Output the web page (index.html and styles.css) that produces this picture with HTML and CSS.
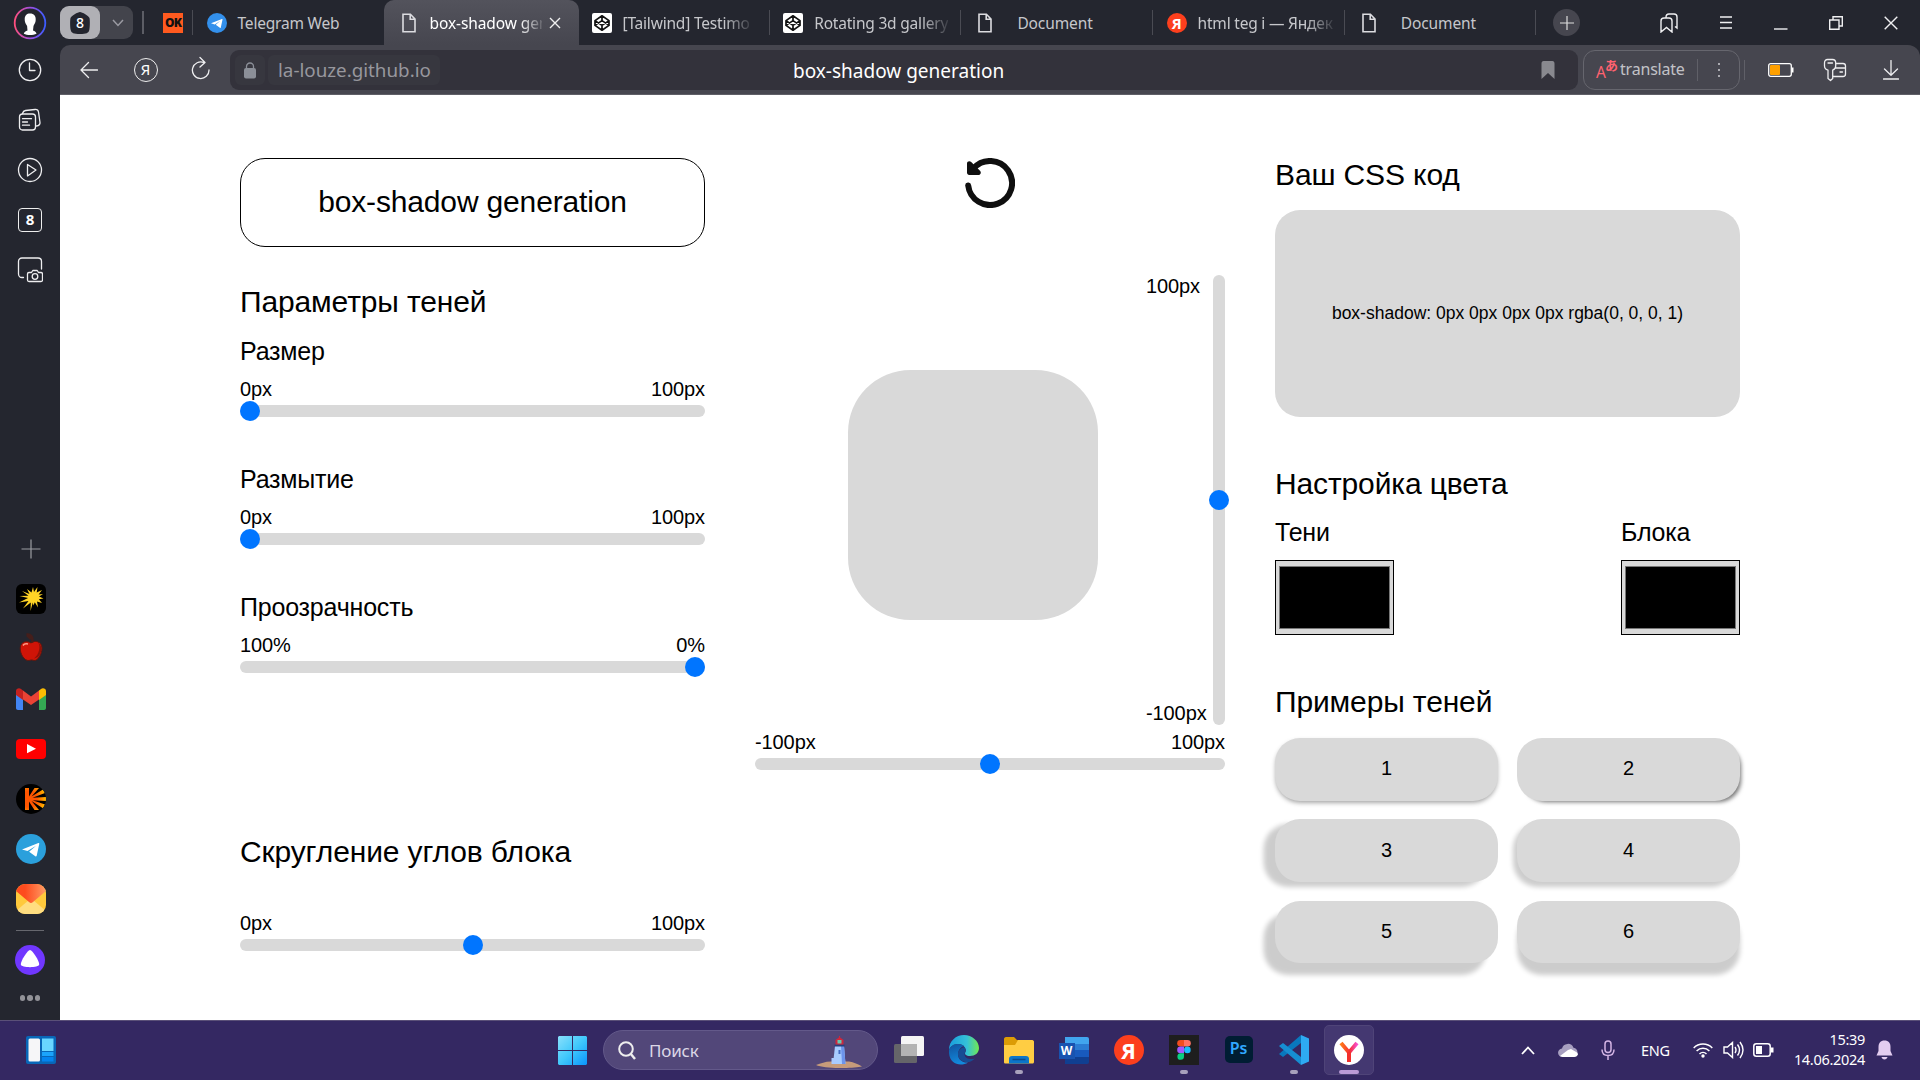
FILE: index.html
```html
<!DOCTYPE html>
<html lang="ru">
<head>
<meta charset="utf-8">
<title>box-shadow generation</title>
<link rel="stylesheet" href="styles.css">
</head>
<body>
<svg class="defs" width="0" height="0">
  <defs>
    <symbol id="file" viewBox="0 0 14 20"><path d="M1 1.2h7.4L13 6v12.8H1z M8.2 1.2V6.3H13" fill="none" stroke="#dcdce0" stroke-width="1.6"/></symbol>
    <symbol id="codepen" viewBox="0 0 20 20"><rect width="20" height="20" rx="2" fill="#fff"/><path d="M10 2.8l7 4.8v4.8l-7 4.8-7-4.8V7.6zM3 7.6l7 4.8 7-4.8M3 12.4l7-4.8 7 4.8M10 2.8v4.8M10 12.4v4.8" fill="none" stroke="#111" stroke-width="1.7" stroke-linejoin="round"/></symbol>
    <symbol id="plane" viewBox="0 0 30 30"><path d="M6 15.4L22.4 9c.6-.2 1 .2.9.8l-2.6 12c-.2.8-.8 1-1.4.5l-6.2-4.6 7-6-8.6 5.4z" fill="#fff"/></symbol>
  </defs>
</svg>
<div class="screen">
  <aside class="sidebar">
    <div class="slot slot-avatar"><svg width="34" height="34" viewBox="0 0 34 34"><defs><linearGradient id="ring" x1="0" x2="1"><stop offset="0" stop-color="#ff4f7d"/><stop offset=".5" stop-color="#a04fe0"/><stop offset="1" stop-color="#3c5cff"/></linearGradient></defs><circle cx="17" cy="17" r="15.3" fill="#23252e" stroke="url(#ring)" stroke-width="1.8"/><path d="M17 7.500c4 0 6 2.500 5.700 6.500 0 3-1.700 4-2.200 6l-.5 4.500c2 .5 3 1.500 3.500 3.200-3.500 1.800-9.500 1.800-12.700 0 .5-1.700 1.700-2.700 3.700-3.200l-.4-4.500c-1.200-2-2.600-4-2.400-7 .1-3.500 2-5.500 5.300-5.500z" fill="#fff"/></svg></div>
    <div class="slot"><svg width="26" height="26" viewBox="0 0 26 26" class="line"><circle cx="13" cy="13" r="10.700"/><path d="M12.500 6v7.500H18"/></svg></div>
    <div class="slot"><svg width="26" height="26" viewBox="0 0 26 26" class="line"><rect x="2.500" y="7" width="16" height="16" rx="3"/><path d="M5.500 6.500c.5-2 1.500-2.800 3-3l9.500-1c2-.2 3.200.7 3.500 2.500l1.500 10.500c.2 2-.7 3-3.500 3.500M5.500 11.700h9M5.500 15h5M5.500 18.200h7"/></svg></div>
    <div class="slot"><svg width="26" height="26" viewBox="0 0 26 26" class="line"><circle cx="13" cy="13" r="11.500"/><path d="M10.500 7.500l8.500 5.500-8.500 6z"/></svg></div>
    <div class="slot"><div class="tab-counter">8</div></div>
    <div class="slot"><svg width="26" height="26" viewBox="0 0 26 26" class="line"><path d="M6.500 20.500H5c-2 0-3.500-1.500-3.500-3.500V4.500c0-2 1.500-3.500 3.500-3.500h16c2 0 3.500 1.500 3.500 3.500V12M12 15.500h2.500l1.300-2h4.400l1.300 2H24c.8 0 1.500.5 1.500 1.500v6c0 .8-.6 1.500-1.500 1.500H12c-1 0-1.500-.6-1.500-1.500v-6c0-1 .6-1.500 1.500-1.500z"/><circle cx="18" cy="19.500" r="2.800"/></svg></div>
    <div class="slot slot-push"><svg width="20" height="20" viewBox="0 0 20 20"><path d="M10 .5v19M.5 10h19" stroke="#9c9da3" stroke-width="1.2"/></svg></div>
    <div class="slot"><svg width="30" height="30" viewBox="0 0 30 30"><rect width="30" height="30" rx="6" fill="#000"/><path d="M17 3l1 5 3.500-5-.8 5.600L26 6l-3.400 4.500L27 10l-4 2.600 4.500 2-4.700.7L26 19l-5-1.500 1 6-3.200-5.200-1.400 3.200-.6-3L14.500 27l.3-8.500L7 24.500l5.500-7.500L3 18.500 12 14 3.500 12l9-.3L6 7l7.500 3L11 5l4.500 3.500z" fill="#ffd426"/></svg></div>
    <div class="slot slot-apple"><svg width="30" height="30" viewBox="0 0 30 30"><path d="M15 10c3-3 11-2 11 5 0 6-4 13-8 12.500-2-.7-3-.7-5 0C8 28 4 20.500 4.200 15 4.500 8 11.500 7.500 15 10z" fill="#cf1407" stroke="#5c1810" stroke-width="1"/><path d="M22 9.500c3 4 1 12-4 16l4-1.500c4-4 5-11 0-14.500z" fill="#8e1208"/><path d="M10.500 1.500c4-.5 7 2 5.500 8M11 2l4 4" stroke="#451e1b" stroke-width="2.500" fill="none"/><path d="M7 12.500c1-1.500 3-2 5-1.500" stroke="#ff9d87" stroke-width="1.500" fill="none"/></svg></div>
    <div class="slot"><svg width="30" height="24" viewBox="0 0 30 24"><path d="M0 7v14c0 1 .8 2 2 2h5V12z" fill="#4285f4"/><path d="M30 7v14c0 1-.8 2-2 2h-5V12z" fill="#34a853"/><path d="M7 12.500v-9L15 9.500l8-6v9L15 18z" fill="#ea4335"/><path d="M0 4v4l7 5V3.500l-2-1.600C3 .4 0 1.600 0 4z" fill="#c5221f"/><path d="M30 4v4l-7 5V3.500l2-1.600c2-1.500 5-.3 5 2.100z" fill="#fbbc04"/></svg></div>
    <div class="slot"><svg width="30" height="20" viewBox="0 0 30 20"><rect width="30" height="20" rx="4" fill="#f00"/><path d="M11 5l9 4.700-9 4.600z" fill="#fff"/></svg></div>
    <div class="slot"><svg width="30" height="30" viewBox="0 0 30 30"><defs><radialGradient id="kino" cx=".2" cy=".5" r=".9"><stop offset=".4" stop-color="#ff5500"/><stop offset="1" stop-color="#ffcf00"/></radialGradient><clipPath id="kc"><circle cx="15" cy="15" r="15"/></clipPath></defs><circle cx="15" cy="15" r="15" fill="#000"/><path clip-path="url(#kc)" d="M9 4h4v8.500L18.500 4H23l-7.500 8.500L27 5.500l2 3.500-12.500 4.700L30 13v4l-13.500-.8L29 20.500l-2 3.800-11.500-7.200L23 26h-4.500L13 17.500V26H9z" fill="url(#kino)"/></svg></div>
    <div class="slot"><svg width="30" height="30" viewBox="0 0 30 30"><circle cx="15" cy="15" r="15" fill="#2ba0dc"/><use href="#plane"/></svg></div>
    <div class="slot"><svg width="30" height="30" viewBox="0 0 30 30"><defs><linearGradient id="flap" x2="1" y2="0"><stop offset=".3" stop-color="#fd4b1e"/><stop offset="1" stop-color="#ff9d66"/></linearGradient><clipPath id="mc"><rect width="30" height="30" rx="9"/></clipPath></defs><g clip-path="url(#mc)"><path d="M0 0h30v30H0z" fill="#ffc93c"/><path d="M0 27L13 16h4l13 11v3H0z" fill="#ffdd80"/><path d="M0 0h30v7L17 18q-2 2-4 0L0 7z" fill="url(#flap)"/></g></svg></div>
    <div class="side-rule"></div>
    <div class="slot slot-alice"><svg width="30" height="30" viewBox="0 0 30 30"><circle cx="15" cy="15" r="15" fill="#7037ff"/><path d="M15 5c2.500 0 9.300 11 9.200 14.500C24 23 6 23 5.800 19.500 5.700 16 12.500 5 15 5z" fill="#fff"/></svg></div>
    <div class="side-dots"><i></i><i></i><i></i></div>
  </aside>

  <div class="window">
    <header class="tabs">
      <div class="group"><span class="group-badge"><svg width="22" height="24" viewBox="0 0 22 24"><path d="M11 1c2 0 9 4 9.500 6 .5 2 .5 9-.2 12-.6 3-3 4-9.300 4s-8.700-1-9.300-4C1 16 1 9 1.500 7 2 5 9 1 11 1z" fill="#23252e"/></svg><b>8</b></span><svg width="12" height="8" viewBox="0 0 12 8"><path d="M1 1l5 5.500L11 1" fill="none" stroke="#9a9aa2" stroke-width="1.500"/></svg></div>
      <span class="group-rule"></span>
      <span class="pin">OK</span>
      <div class="tab tab-telegram"><svg width="20" height="20" viewBox="0 0 30 30"><circle cx="15" cy="15" r="15" fill="#3390ec"/><use href="#plane"/></svg><span>Telegram Web</span></div>
      <div class="tab tab-active"><svg width="14" height="20"><use href="#file"/></svg><span class="fade">box-shadow gen</span><svg width="12" height="12" viewBox="0 0 12 12"><path d="M1 1l10 10M11 1L1 11" stroke="#f0f0f0" stroke-width="1.400"/></svg></div>
      <div class="tab"><svg width="20" height="20"><use href="#codepen"/></svg><span class="fade">[Tailwind] Testimo</span></div>
      <div class="tab"><svg width="20" height="20"><use href="#codepen"/></svg><span class="fade">Rotating 3d gallery</span></div>
      <div class="tab tab-doc"><svg width="14" height="20"><use href="#file"/></svg><span>Document</span></div>
      <div class="tab"><i class="ya">Я</i><span class="fade">html teg i — Яндек</span></div>
      <div class="tab tab-doc"><svg width="14" height="20"><use href="#file"/></svg><span>Document</span></div>
      <div class="new-tab"><svg width="14" height="14" viewBox="0 0 14 14"><path d="M7 0v14M0 7h14" stroke="#ddd" stroke-width="1.200"/></svg></div>
      <div class="win-controls">
        <svg width="18" height="20" viewBox="0 0 18 20"><path d="M1 19V8c0-2 1-3 3-3h5c2 0 3 1 3 3v11l-5.500-4.500zM6 4.500C6 2.500 7 1 9 1h5c2 0 3 1 3 3v11l-2-1.500"/></svg>
        <svg width="14" height="14" viewBox="0 0 14 14"><path d="M1 1h12M1 6.500h12M1 12h12"/></svg>
        <svg width="14" height="14" viewBox="0 0 14 14"><path d="M0 13h13.500"/></svg>
        <svg width="14" height="14" viewBox="0 0 14 14"><path d="M.7 4h9.300v9.300H.7zM4 4V.7h9.300V10H10"/></svg>
        <svg width="14" height="14" viewBox="0 0 14 14"><path d="M.7.7l12.600 12.600M13.300.7L.7 13.300"/></svg>
      </div>
    </header>

    <nav class="toolbar">
      <div class="nav-buttons">
        <svg width="18" height="18" viewBox="0 0 18 18" class="line"><path d="M17.500 9H1M8.500 1.500L1 9l7.500 7.500"/></svg>
        <span class="ya-outline">Я</span>
        <svg width="20" height="24" viewBox="0 0 20 24" class="line"><path d="M18 14A8.300 8.300 0 1 1 13 6.600M9 1.500l5 5L9 11"/></svg>
      </div>
      <div class="address">
        <span class="lock"><svg width="14" height="17" viewBox="0 0 14 17"><rect x="1" y="6" width="12" height="10.500" rx="2" fill="#8b8f98"/><path d="M3.500 7V4.500a3.500 3.500 0 0 1 7 0V7" fill="none" stroke="#8b8f98" stroke-width="1.300"/></svg></span>
        <span class="domain">la-louze.github.io</span>
        <span class="page-title">box-shadow generation</span>
        <svg class="bookmark" width="14" height="18" viewBox="0 0 14 18"><path d="M.5 2.500C.5 1 1.300 0 2.500 0h9c1.200 0 2 1 2 2.500V18L7 12 .5 18z" fill="#89898f"/></svg>
      </div>
      <div class="translate">
        <span class="tr-icon"><i>A</i><i>あ</i></span><span class="tr-label">translate</span>
        <span class="tr-more"><svg width="4" height="16" viewBox="0 0 4 16"><path d="M1 1h2v2H1zM1 7h2v2H1zM1 13h2v2H1z" fill="#aaaab0"/></svg></span>
      </div>
      <div class="tools">
        <svg width="26" height="14" viewBox="0 0 26 14"><rect x=".7" y=".7" width="22.600" height="12.600" rx="2" fill="none" stroke="#fff" stroke-width="1.300"/><path d="M24 4.500h1.500v5H24z" fill="#fff"/><rect x="2" y="2" width="10" height="10" rx="1" fill="#ffa000"/></svg>
        <svg width="24" height="24" viewBox="0 0 24 24" class="line"><path d="M4.500 1.500h5c2 0 3.200 1.500 3.200 3.500v3c0 2-1.500 3.500-3 4.200v8.300L7.500 22.500 5 20.500v-8.300C3 11.500 1.500 10 1.500 8V5c0-2 1.200-3.500 3-3.500zM5 5h4.500M13 5.500h7c1.500 0 2.500 1 2.500 2.500v8c0 1.500-1 2.500-2.500 2.500h-9.500M12.500 10h10M17 14h2.500"/></svg>
        <svg width="16" height="20" viewBox="0 0 16 20" class="line"><path d="M8 .5V15M1.500 9L8 15.300 14.500 9M.5 19h15"/></svg>
      </div>
    </nav>

    <main class="page">
      <section class="col-left">
        <h1 class="title">box-shadow generation</h1>
        <h2>Параметры теней</h2>
        <div class="field"><h3>Размер</h3><div class="limits"><span>0px</span><span>100px</span></div><input type="range" class="range" min="0" max="100" value="0"></div>
        <div class="field"><h3>Размытие</h3><div class="limits"><span>0px</span><span>100px</span></div><input type="range" class="range" min="0" max="100" value="0"></div>
        <div class="field"><h3>Проозрачность</h3><div class="limits"><span>100%</span><span>0%</span></div><input type="range" class="range" min="0" max="100" value="100"></div>
        <h2 class="radius-title">Скругление углов блока</h2>
        <div class="limits"><span>0px</span><span>100px</span></div><input type="range" class="range" min="0" max="100" value="50">
      </section>

      <section class="col-mid">
        <svg class="reset" width="50" height="50" viewBox="0 0 50 50"><path d="M3.200 27.500A22 22 0 1 0 8.500 10.500" fill="none" stroke="#0f0f0f" stroke-width="6" stroke-linecap="round"/><path d="M2 5.500C2 3.200 4.700 2.400 6.200 4L15 12.700c1.600 1.600.7 4.300-1.500 4.300H4.200C3 17 2 16 2 14.800z" fill="#0f0f0f"/></svg>
        <div class="stage">
          <div class="preview"></div>
          <div class="v-limits"><span>100px</span><span>-100px</span></div>
          <input type="range" class="range range-vertical" min="-100" max="100" value="0">
        </div>
        <div class="limits"><span>-100px</span><span>100px</span></div>
        <input type="range" class="range" min="-100" max="100" value="0">
      </section>

      <section class="col-right">
        <h2>Ваш CSS код</h2>
        <div class="code">box-shadow: 0px 0px 0px 0px rgba(0, 0, 0, 1)</div>
        <h2>Настройка цвета</h2>
        <div class="colors">
          <div class="color"><h3>Тени</h3><div class="swatch"></div></div>
          <div class="color"><h3>Блока</h3><div class="swatch"></div></div>
        </div>
        <h2>Примеры теней</h2>
        <div class="samples">
          <button class="s1">1</button><button class="s2">2</button>
          <button class="s3">3</button><button class="s4">4</button>
          <button class="s5">5</button><button class="s6">6</button>
        </div>
      </section>
    </main>
  </div>

  <footer class="taskbar">
    <svg class="widgets" width="30" height="28" viewBox="0 0 30 28"><rect width="30" height="28" rx="2" fill="#0867b8"/><rect x="2.500" y="2.500" width="11.500" height="23" rx="1.500" fill="#f6f6f8"/><path d="M16 2.500h11.500V15H16z" fill="#69d7ff"/><path d="M16 16h11.500v4H16z" fill="#1ba4fb"/><path d="M16 21h11.500v4.500H16z" fill="#0484ee"/></svg>
    <svg class="start" width="29" height="29" viewBox="0 0 29 29"><defs><linearGradient id="win" x2="1" y2="1"><stop offset="0" stop-color="#8ae0fb"/><stop offset=".5" stop-color="#40c8fb"/><stop offset="1" stop-color="#0a94fb"/></linearGradient></defs><path d="M1 0h13v14H0V1zM15 0h13l1 1v13H15zM0 15h14v14H1l-1-1zM15 15h14v13l-1 1H15z" fill="url(#win)"/></svg>
    <div class="search">
      <svg width="18" height="19" viewBox="0 0 18 19"><circle cx="8" cy="8" r="6.800" fill="none" stroke="#eee" stroke-width="2"/><path d="M12.500 12.500L17 18" stroke="#eee" stroke-width="2.400"/></svg>
      <span>Поиск</span>
      <svg width="46" height="32" viewBox="0 0 46 32"><path d="M0 29c5-1.500 9-3.500 15-3.500h18c5 1 9 2.500 13 5-9 2-37 2.500-46-1.500z" fill="#c69b7a"/><path d="M19 10h9l1.500 18H17z" fill="#a7ccff"/><path d="M25 10h3l1.500 18H26z" fill="#6c94eb"/><path d="M15.500 22h5v6h-5z" fill="#a9caff"/><path d="M18.500 8.500h10v2h-10z" fill="#263e7c"/><path d="M23 0h1v2h-1z" fill="#cf263c"/><path d="M19.500 4l4-3 4 3v4.500h-8z" fill="#cf263c"/><path d="M21.500 4h4v3.500h-4z" fill="#68c9b0"/><path d="M22.500 14h2v4h-2z" fill="#426dc4"/></svg>
    </div>
    <div class="apps">
      <div><svg width="30" height="28" viewBox="0 0 30 28"><rect x="7" width="23" height="20" rx="1.500" fill="#f5f5f5"/><rect y="8" width="23" height="19" rx="1.500" fill="#656569"/><path d="M7 8h16v12H7z" fill="#b3b3b3"/></svg></div>
      <div><svg width="30" height="30" viewBox="0 0 30 30"><defs><linearGradient id="eg" x2="1"><stop offset=".1" stop-color="#1da3dc"/><stop offset=".6" stop-color="#35c1d8"/><stop offset="1" stop-color="#71e950"/></linearGradient><linearGradient id="eb" y2="1" x2=".3"><stop offset="0" stop-color="#10529e"/><stop offset="1" stop-color="#1289dc"/></linearGradient></defs><path d="M0 15C0 6 7 0 15 0s15 6 15 13c0 5-4 8-9 8-4 0-6-2-4.500-4C18 14 15 9 9 9 4 9 1 12 0 15z" fill="url(#eg)"/><path d="M0 15c1-3 4-6 9-6 3 0 5 1 6 2-4 1-6 5-6 8 0 6 5 9 10 8.500C12 32-1 30 0 15z" fill="url(#eb)"/><path d="M15.500 12c-4 1-7 4-6.500 8 1 7 11 10 17 3.500-5 1.500-10 0-10.500-4 0-2 1.500-3 1-5z" fill="#174c94"/></svg></div>
      <div class="open"><svg width="30" height="28" viewBox="0 0 30 28"><path d="M0 3c0-1 .8-2 2-2h8l3 3h15c1 0 2 1 2 2v6H0z" fill="#dc9c05"/><path d="M0 9h11l3-5h14c1 0 2 1 2 2v20c0 .8-.6 1.500-1.500 1.500h-27C.6 27.500 0 27 0 26z" fill="#ffcd43"/><path d="M5 27.500V23c0-2 1-3 3-3h14c2 0 3 1 3 3v4.500z" fill="#0c76c9"/><path d="M8.500 23.500h13" stroke="#0b4b8c" stroke-width="1.500"/></svg></div>
      <div><span class="word"><b>W</b></span></div>
      <div><i class="ya ya-big">Я</i></div>
      <div class="open"><svg width="30" height="30" viewBox="0 0 30 30"><path d="M0 0h30v30H0z" fill="#1e1e1e"/><path d="M15 5h-3.500a3.300 3.300 0 0 0 0 6.600H15z" fill="#f24e1e"/><path d="M15 5h3.500a3.300 3.300 0 0 1 0 6.600H15z" fill="#ff7262"/><path d="M15 11.600h-3.500a3.300 3.300 0 0 0 0 6.600H15z" fill="#a259ff"/><circle cx="18.400" cy="14.900" r="3.300" fill="#1abcfe"/><path d="M15 18.200h-3.500a3.300 3.300 0 1 0 3.500 3.300z" fill="#0acf83"/></svg></div>
      <div><span class="ps">Ps</span></div>
      <div class="open"><svg width="30" height="30" viewBox="0 0 30 30"><path d="M22 0v8L4 22l-4-3z" fill="#0978bd"/><path d="M22 30v-8L4 8l-4 3z" fill="#168ed2"/><path d="M22 0l8 3.500v23L22 30z" fill="#2eaaf2"/></svg></div>
      <div class="open current"><svg width="30" height="30" viewBox="0 0 30 30"><defs><linearGradient id="yb" x2="1"><stop offset="0" stop-color="#ff7a18"/><stop offset=".55" stop-color="#f52d35"/><stop offset="1" stop-color="#f850d0"/></linearGradient></defs><circle cx="15" cy="15" r="15" fill="#fff"/><path d="M7 8l8 9.500L23 8M15 16v11" fill="none" stroke="url(#yb)" stroke-width="4"/><path d="M13 17h4v10h-4z" fill="#f3302c"/></svg></div>
    </div>
    <div class="tray">
      <svg class="t-up" width="14" height="9" viewBox="0 0 14 9"><path d="M1 8l6-6.500L13 8" fill="none" stroke="#fff" stroke-width="1.800"/></svg>
      <svg class="t-cloud" width="20" height="14" viewBox="0 0 20 14"><path d="M4.500 14a4.200 4.200 0 0 1-.5-8.400 6 6 0 0 1 11.500-.8A4.700 4.700 0 0 1 16 14z" fill="#a79fc0"/><path d="M2 13l8-6 3-1 6 3.500c2 2 0 4.500-3 4.500H4.500z" fill="#fff"/></svg>
      <svg class="t-mic" width="14" height="20" viewBox="0 0 14 20"><g fill="none" stroke="#d3b4e4" stroke-width="1.500"><rect x="4" y="1" width="6" height="11.500" rx="3"/><path d="M1 9.500c0 4 2.500 6 6 6s6-2 6-6M7 15.500V20"/></g></svg>
      <span class="t-lang">ENG</span>
      <svg class="t-wifi" width="20" height="16" viewBox="0 0 20 16"><g fill="none" stroke="#fff" stroke-width="1.500"><path d="M.7 6a13 13 0 0 1 18.600 0M3.600 9a9 9 0 0 1 12.800 0M6.500 12a5 5 0 0 1 7 0"/></g><circle cx="10" cy="14" r="1.700" fill="#fff"/></svg>
      <svg class="t-vol" width="21" height="18" viewBox="0 0 21 18"><g fill="none" stroke="#fff" stroke-width="1.400"><path d="M1 6h3.500L9.500 1.500v15L4.500 12H1zM12 6q2 3 0 6M14.500 3.500q4 5.500 0 11M17 1q6 8 0 16"/></g></svg>
      <svg class="t-bat" width="21" height="14" viewBox="0 0 21 14"><rect x=".8" y=".8" width="16.400" height="12.400" rx="2.500" fill="none" stroke="#fff" stroke-width="1.500"/><path d="M3 3h6v8H3zM18 4.500h2.500v5H18z" fill="#fff"/></svg>
      <div class="clock"><span>15:39</span><span>14.06.2024</span></div>
      <svg class="t-bell" width="17" height="20" viewBox="0 0 17 20"><path d="M8.500.5c4 0 6 2.500 6 6.500v4l2 4.500H.5l2-4.500V7c0-4 2-6.500 6-6.500zM5.500 17h6c-.3 1.500-1.500 2.500-3 2.500s-2.700-1-3-2.500z" fill="#e3cdf0"/></svg>
    </div>
  </footer>
</div>
</body>
</html>
```
FILE: styles.css
```css
* { box-sizing: border-box; margin: 0; padding: 0; }
body { background: #24262f; font-family: "Liberation Sans", Arial, sans-serif; overflow: hidden; }
.defs { position: absolute; }
svg { display: block; flex: none; }
.line { fill: none; stroke: #eeeef0; stroke-width: 1.3; stroke-linejoin: round; stroke-linecap: round; }

.screen { display: grid; grid-template: 1020px 60px / 60px 1860px; width: 1920px; height: 1080px; }

/* Browser side panel */
.sidebar { display: flex; flex-direction: column; background: #24262f; }
.slot { height: 50px; display: flex; align-items: center; justify-content: center; flex: none; }
.slot-avatar { height: 45px; }
.slot-push { margin-top: 229px; }
.slot-push, .slot-push ~ .slot { padding-left: 1.5px; }
.slot-push ~ .slot-apple { padding-bottom: 3px; }
.tab-counter { width: 24px; height: 24px; border: 1.5px solid #eee; border-radius: 4px; color: #fff; font: bold 15px/21px "Noto Sans", sans-serif; text-align: center; }
.side-rule { width: 28px; height: 1px; background: #66676e; margin: 6px 0 0 16px; }
.slot-push ~ .slot-alice { height: 30px; margin-top: 14px; padding-left: 0; }
.side-dots { display: flex; gap: 2px; justify-content: center; margin-top: 20px; }
.side-dots i { width: 5.5px; height: 5.5px; border-radius: 50%; background: #929298; }

.window { display: flex; flex-direction: column; min-width: 0; }

/* Tab strip */
.tabs { display: flex; height: 45px; align-items: center; font: 15.5px/22px "Noto Sans", sans-serif; color: #c6c7cb; letter-spacing: -.2px; }
.group { width: 73px; height: 33px; border-radius: 9px; background: #43444c; display: flex; align-items: center; gap: 12px; }
.group-badge { width: 40px; height: 33px; border-radius: 9px; background: #b0b0b5; display: grid; place-items: center; }
.group-badge > * { grid-area: 1 / 1; }
.group-badge b { color: #fff; font-size: 14px; font-weight: 500; }
.group-rule { width: 2px; height: 23px; background: #5c5d65; margin-left: 9px; }
.pin { width: 20px; height: 24px; margin-left: 19px; border-radius: 2px; background: linear-gradient(#ff5a1f, #ff5a1f) center / 20px 20px no-repeat; color: #111; font: 800 12px/24px "Open Sans", sans-serif; text-align: center; letter-spacing: -.8px; }
.tab { width: 191.7px; height: 25px; display: flex; align-items: center; padding-left: 13.5px; gap: 11px; border-right: 1px solid #4a4b53; white-space: nowrap; flex: none; }
.fade { -webkit-mask-image: linear-gradient(90deg, #000 80%, rgba(0, 0, 0, .15)); mask-image: linear-gradient(90deg, #000 80%, rgba(0, 0, 0, .15)); }
.tab-telegram { width: 192px; border-left: 1px solid #4a4b53; border-right: 0; margin-left: 9px; }
.tab-active { height: 45px; width: 195px; border: 0; border-radius: 10px 10px 0 0; background: linear-gradient(#53535c, #46464f); color: #fff; padding-left: 17.5px; gap: 14px; margin-right: -1px; }
.tab-active .fade { width: 112px; letter-spacing: -.1px; }
.tab-active svg:last-child { margin-left: -7px; }
.tab-doc { padding-left: 17px; gap: 25px; letter-spacing: -.1px; }
.ya { width: 20px; height: 20px; border-radius: 50%; background: #fc3f1d; color: #fff; font: bold 15px/20px "Open Sans", sans-serif; text-align: center; flex: none; }
.ya-big { width: 30px; height: 30px; font-size: 22px; line-height: 30px; }
.new-tab { width: 27px; height: 27px; margin-left: 17px; border-radius: 50%; background: #46464f; display: grid; place-items: center; flex: none; }
.win-controls { margin-left: auto; padding-right: 22px; display: flex; gap: 41px; align-items: center; fill: none; stroke: #f0f0f2; stroke-width: 1.4; }

/* Toolbar */
.toolbar { height: 50px; display: flex; align-items: center; background: #46464f; border-radius: 10px 12px 0 0; border-bottom: 1px solid #5f5f67; font-family: "Noto Sans", sans-serif; color: #fff; padding-top: 1px; }
.nav-buttons { width: 170px; display: flex; align-items: center; padding-left: 20px; }
.ya-outline { width: 24px; height: 24px; border: 1.3px solid #eee; border-radius: 50%; font-size: 15px; line-height: 21px; text-align: center; margin: 0 33px 0 35.5px; flex: none; }
.nav-buttons svg:last-child { margin-top: -4px; }
.address { width: 1348px; height: 40px; border-radius: 9px; background: #33323b; display: flex; align-items: center; padding: 0 23px 0 5px; flex: none; }
.lock { width: 30px; height: 30px; background: #37373f; border-radius: 6px; display: grid; place-items: center; }
.domain { width: 172px; height: 30px; margin-left: 3px; padding-left: 10px; background: #37373f; border-radius: 6px; color: #97979e; font-size: 18.8px; line-height: 31px; white-space: nowrap; }
.page-title { margin-left: 353px; padding-top: 1px; font-size: 19px; line-height: 26px; white-space: nowrap; }
.bookmark { margin-left: auto; }
.translate { width: 157px; height: 40px; margin-left: 5px; border: 1px solid #66666e; border-radius: 12px; display: flex; align-items: center; color: #c2c2c7; flex: none; }
.tr-icon { display: flex; width: 22px; margin-left: 12px; color: #ff6270; }
.tr-icon i { font: 15.5px/20px "Noto Sans", sans-serif; padding-top: 4px; }
.tr-icon i + i { font: bold 13px/18px "Noto Sans CJK JP", sans-serif; padding: 0; margin: -2px 0 0 -1px; }
.tr-label { width: 66px; margin-left: 2px; font-size: 16px; line-height: 20px; margin-top: -2px; letter-spacing: -.2px; }
.tr-more { height: 22px; border-left: 1px solid #606068; margin-left: 11px; padding-left: 19px; display: flex; align-items: center; }
.tools { height: 20px; border-left: 1px solid #606068; margin-left: 4px; padding-left: 23px; display: flex; align-items: center; }
.tools svg + svg { margin-left: 29px; }
.tools svg:last-child { margin-left: 36px; }

/* Generator page */
.page { flex: 1; background: #fff; color: #000; display: grid; grid-template-columns: 465px 470px 465px; column-gap: 50px; padding: 63px 0 0 180px; }
h2 { font-weight: 400; font-size: 30px; line-height: 34px; letter-spacing: -.13px; }
h3 { font-weight: 400; font-size: 25px; line-height: 28px; letter-spacing: -.2px; }
.limits { display: flex; justify-content: space-between; font-size: 20px; line-height: 22px; letter-spacing: -.1px; }
.title { height: 89px; border: 1px solid #000; border-radius: 25px; font-weight: 400; font-size: 30px; line-height: 86px; letter-spacing: -.16px; text-align: center; margin-bottom: 38px; }
.field { height: 128px; padding-top: 17.5px; }
.field .limits { margin-top: 13.5px; }
.radius-title { margin: 132px 0 0; }
.radius-title + .limits { margin-top: 43px; }
.range { -webkit-appearance: none; appearance: none; display: block; width: 100%; height: 12.5px; margin-top: 4.6px; border-radius: 7px; background: #d9d9d9; }
.range::-webkit-slider-thumb { -webkit-appearance: none; width: 20px; height: 20px; border-radius: 50%; background: #0075ff; }
.reset { margin-left: 210px; }
.stage { height: 450px; margin: 67px 0 6px; display: grid; grid-template-columns: 250px 1fr 12px; padding-left: 93px; align-items: center; }
.preview { width: 250px; height: 250px; border-radius: 62.5px; background: #d9d9d9; margin-bottom: 10px; }
.v-limits { height: 450px; padding: 0 0 1px 48px; display: flex; flex-direction: column; justify-content: space-between; font-size: 20px; line-height: 22px; letter-spacing: -.1px; white-space: nowrap; }
.range-vertical { writing-mode: vertical-lr; direction: rtl; width: 12px; height: 450px; margin: 0; }
.code { height: 207px; margin: 18px 0 50px; border-radius: 25px; background: #d9d9d9; display: grid; place-items: center; font-size: 17.5px; }
.colors { display: flex; justify-content: space-between; margin: 17px 0 50px; }
.color { width: 119px; }
.swatch { height: 75px; margin-top: 14px; border: 1px solid #000; padding: 5px 3px; background: #d9d9d9; display: grid; }
.swatch::before { content: ""; border: 1px solid #777; background: #000; }
.samples { display: grid; grid-template-columns: 1fr 1fr; gap: 18.75px; margin-top: 19px; }
.samples button { height: 62.5px; border: 0; border-radius: 25px; background: #d9d9d9; color: #000; font: 20px/22px "Liberation Sans", Arial, sans-serif; padding-bottom: 2px; }
.samples .s1 { box-shadow: 0 2.5px 5px -1px rgba(0, 0, 0, .4); }
.samples .s2 { box-shadow: 4px 4px 4px -3px rgba(0, 0, 0, .55); }
.samples .s3 { box-shadow: -11.5px 5px 5px rgba(0, 0, 0, .2); }
.samples .s4 { box-shadow: -4px 5px 5px rgba(0, 0, 0, .2); }
.samples .s5 { box-shadow: -11.5px 12px 5px rgba(0, 0, 0, .2); }
.samples .s6 { box-shadow: 0 12px 5px rgba(0, 0, 0, .2); }

/* Windows taskbar */
.taskbar { grid-column: 1 / 3; background: #342862; border-top: 1px solid #5a5078; display: flex; align-items: center; padding: 0 0 1px 26px; color: #fff; font-family: "Noto Sans", sans-serif; }
.start { margin-left: 502px; }
.search { width: 275px; height: 40px; margin-left: 16px; border: 1px solid #63598a; border-radius: 20px; background: #524779; display: flex; align-items: center; padding: 0 15px 0 14px; }
.search span { font-size: 17px; line-height: 22px; margin: 0 auto 0 13px; padding-top: 1px; color: #dcd7e6; letter-spacing: -.2px; }
.search svg:last-child { margin-top: 3px; }
.apps { display: flex; margin-left: 3px; }
.apps > div { width: 55px; height: 50px; display: grid; place-items: center; position: relative; }
.open::after { content: ""; position: absolute; bottom: 1px; left: 24px; width: 8px; height: 4px; border-radius: 2px; background: #a8a1bc; }
.apps .current { width: 50px; margin-left: 3px; border-radius: 5px; background: #443871; border: 1px solid #4f4478; }
.apps .current::after { left: 14px; bottom: 0; width: 20px; background: #bb9bd6; }
.word { width: 30px; height: 27px; padding: 6px 14px 5px 0; border-radius: 2px; background: linear-gradient(#41a5ee 25%, #2b7cd3 25% 50%, #185abd 50% 75%, #103f91 75%) right / 24px 27px no-repeat; }
.word b { display: block; width: 16px; height: 16px; background: #1853b0; font-size: 12px; line-height: 16px; text-align: center; }
.ps { width: 28px; height: 27px; margin-bottom: 2px; border-radius: 5px; background: #001d33; color: #31a8ff; font-size: 16px; line-height: 25px; font-weight: 600; text-align: center; }
.tray { flex: 1; display: flex; align-items: center; padding-left: 147px; letter-spacing: -.3px; }
.t-cloud { margin-left: 23px; }
.t-mic { margin-left: 23px; }
.t-lang { width: 30px; margin-left: 26px; font-size: 14.5px; line-height: 20px; margin-top: -1px; }
.t-wifi { margin-left: 22px; }
.t-vol { margin-left: 10px; }
.t-bat { margin-left: 9px; }
.clock { width: 91px; display: flex; flex-direction: column; text-align: right; line-height: 20px; font-size: 14.5px; margin-top: -2px; }
.t-bell { margin-left: 11px; }
```
